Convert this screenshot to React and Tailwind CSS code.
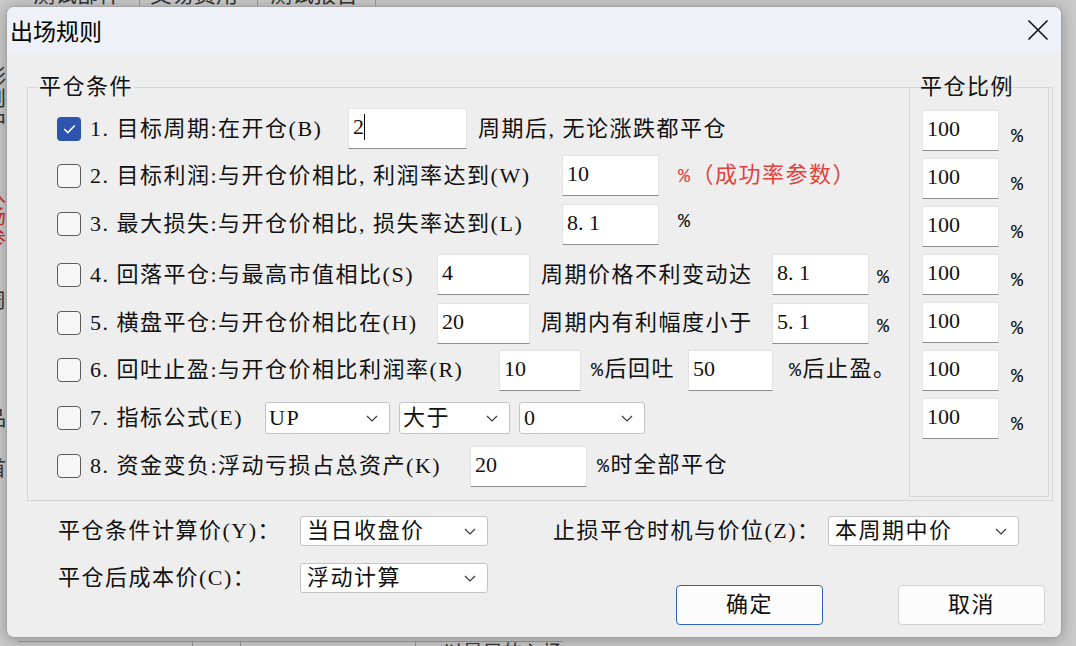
import React from "react";

const serif = "font-['Liberation_Serif','Noto_Sans_CJK_SC',serif]";
const mono = "font-['Liberation_Mono','Noto_Sans_CJK_SC',monospace]";

function Check({ checked }) {
  if (checked) {
    return (
      <div className="flex-none w-[24px] h-[24px] rounded-[4px] bg-[#2d55b0] flex items-center justify-center">
        <svg width="13" height="10" viewBox="0 0 13 10">
          <path d="M1.2 5l3.6 3.6L11.8 1.4" fill="none" stroke="white" strokeWidth="1.5" />
        </svg>
      </div>
    );
  }
  return <div className="flex-none w-[24px] h-[24px] rounded-[4px] border-[1.5px] border-[#5c5c5c] bg-[#f6f6f6]" />;
}

function Field({ className = "", children }) {
  return (
    <div
      className={`flex-none flex h-[41px] bg-white border border-[#e3e3e3] border-b-[#8e8e8e] pl-[4px] pt-[5px] text-[22px] leading-[26px] tracking-normal ${className}`}
    >
      {children}
    </div>
  );
}

function Drop({ className = "", text }) {
  return (
    <div
      className={`flex-none flex items-center justify-between bg-white border border-[#c4c4c4] rounded-[3px] pr-[11px] text-[22px] leading-[26px] ${className}`}
    >
      <span>{text}</span>
      <svg width="12" height="7" viewBox="0 0 12 7">
        <path d="M1 1l5 5 5-5" fill="none" stroke="#333" strokeWidth="1.1" />
      </svg>
    </div>
  );
}

function Pct({ className = "" }) {
  return <span className={`${mono} text-[20px] leading-[26px] ${className}`}>%</span>;
}

export default function App() {
  return (
    <div className="relative w-[1076px] h-[646px] overflow-hidden bg-[#c9c9c9] text-[#111]">
      {/* app behind the dialog */}
      <div className={`flex h-[22px] -mt-[16px] text-[22px] leading-[22px] text-[#333] ${serif}`}>
        <div className="w-[140px] pl-[33px] border-r border-[#9a9a9a]">测试部件</div>
        <div className="w-[118px] pl-[10px] border-r border-[#9a9a9a]">交易费用</div>
        <div className="w-[118px] pl-[12px] border-r border-[#9a9a9a]">测试报告</div>
      </div>
      <div className={`flex flex-col w-[6px] overflow-hidden text-[20px] leading-[22px] text-[#333] ${serif}`}>
        <div className="mt-[60px] -ml-[14px]">彩</div>
        <div className="-ml-[14px]">则</div>
        <div className="-ml-[14px]">中</div>
        <div className="mt-[52px] -ml-[14px] text-[#c33]">入</div>
        <div className="-ml-[14px] text-[#c33]">场</div>
        <div className="-ml-[14px] text-[#c33]">参</div>
        <div className="mt-[40px] -ml-[14px]">周</div>
        <div className="mt-[96px] -ml-[14px]">品</div>
        <div className="mt-[28px] -ml-[14px]">首</div>
      </div>

      {/* dialog */}
      <div
        className={`absolute left-[6px] top-[6px] w-[1056px] h-[632px] rounded-[8px] border border-[#a4a4a4] bg-[#eeeeee] shadow-[0_2px_14px_rgba(0,0,0,0.28)] overflow-hidden flex flex-col ${serif}`}
      >
        {/* title bar */}
        <div className="flex-none h-[45px] bg-[#eef1f8] flex items-center justify-between pl-[3px] pr-[12px]">
          <span className="font-['Noto_Sans_CJK_SC',sans-serif] text-[23px] leading-[30px] text-black">出场规则</span>
          <svg width="22" height="22" viewBox="0 0 22 22">
            <path d="M1.5 1.5l19 19M20.5 1.5l-19 19" stroke="#111" strokeWidth="1.6" />
          </svg>
        </div>

        {/* group box */}
        <fieldset className="flex-none mt-[23px] ml-[20px] w-[1026px] h-[426px] border border-[#d6d6d6] tracking-[1.5px]">
          <legend className="ml-[10px] px-[1px] text-[22px] leading-[24px]">平仓条件</legend>
          <div className="flex h-[401px]">
            <div className="w-[881px] pl-[29px] pt-[6px] text-[22px] leading-[26px]">
              <div className="flex items-center h-[47px]">
                <Check checked />
                <span className="ml-[9px] w-[258px]">1. 目标周期:在开仓(B)</span>
                <Field className="w-[119px] pl-[2px]">
                  <span>2</span>
                  <span className="w-[1px] h-[26px] bg-black" />
                </Field>
                <span className="ml-[11px]">周期后, 无论涨跌都平仓</span>
              </div>
              <div className="flex items-center h-[47px]">
                <Check />
                <span className="ml-[9px] w-[472px] whitespace-nowrap">2. 目标利润:与开仓价相比, 利润率达到(W)</span>
                <Field className="w-[97px]">10</Field>
                <span className="ml-[19px] text-[#e5403a]">
                  <Pct />（成功率参数）
                </span>
              </div>
              <div className="flex items-center h-[50px]">
                <Check />
                <span className="ml-[9px] w-[472px] whitespace-nowrap">3. 最大损失:与开仓价相比, 损失率达到(L)</span>
                <Field className="w-[97px]">8. 1</Field>
                <Pct className="ml-[19px] -mt-[4px]" />
              </div>
              <div className="flex items-center h-[51px]">
                <Check />
                <span className="ml-[9px] w-[347px]">4. 回落平仓:与最高市值相比(S)</span>
                <Field className="w-[93px]">4</Field>
                <span className="ml-[11px] w-[231px] whitespace-nowrap">周期价格不利变动达</span>
                <Field className="w-[97px]">8. 1</Field>
                <Pct className="ml-[8px] pt-[7px]" />
              </div>
              <div className="flex items-center h-[46px]">
                <Check />
                <span className="ml-[9px] w-[347px]">5. 横盘平仓:与开仓价相比在(H)</span>
                <Field className="w-[93px]">20</Field>
                <span className="ml-[11px] w-[231px] whitespace-nowrap">周期内有利幅度小于</span>
                <Field className="w-[97px]">5. 1</Field>
                <Pct className="ml-[8px] pt-[8px]" />
              </div>
              <div className="flex items-center h-[48px]">
                <Check />
                <span className="ml-[9px] w-[409px] whitespace-nowrap">6. 回吐止盈:与开仓价相比利润率(R)</span>
                <Field className="w-[82px]">10</Field>
                <span className="ml-[10px] w-[97px] whitespace-nowrap">
                  <Pct />后回吐
                </span>
                <Field className="w-[85px]">50</Field>
                <span className="ml-[16px] whitespace-nowrap">
                  <Pct />后止盈。
                </span>
              </div>
              <div className="flex items-center h-[48px]">
                <Check />
                <span className="ml-[9px] w-[175px]">7. 指标公式(E)</span>
                <Drop className="w-[125px] h-[32px] pl-[3px]" text="UP" />
                <Drop className="ml-[9px] w-[111px] h-[32px] pl-[3px]" text="大于" />
                <Drop className="ml-[9px] w-[126px] h-[32px] pl-[4px]" text="0" />
              </div>
              <div className="flex items-center h-[48px]">
                <Check />
                <span className="ml-[9px] w-[380px] whitespace-nowrap">8. 资金变负:浮动亏损占总资产(K)</span>
                <Field className="w-[117px]">20</Field>
                <span className="ml-[10px]">
                  <Pct />时全部平仓
                </span>
              </div>
            </div>

            {/* ratio column */}
            <fieldset className="w-[140px] -mt-[24px] mb-[3px] border border-[#d6d6d6]">
              <legend className="ml-[9px] px-[1px] text-[22px] leading-[24px]">平仓比例</legend>
              <div className="flex flex-col gap-[7px] pt-[11px] pl-[12px] text-[22px] leading-[26px]">
                {[0, 1, 2, 3, 4, 5, 6].map((i) => (
                  <div key={i} className="flex items-center">
                    <Field className="w-[77px]">100</Field>
                    <Pct className="ml-[12px] pt-[13px]" />
                  </div>
                ))}
              </div>
            </fieldset>
          </div>
        </fieldset>

        {/* bottom settings */}
        <div className="flex items-center mt-[15px] pl-[51px] text-[22px] leading-[26px] tracking-[1.5px]">
          <span className="w-[242px] whitespace-nowrap">平仓条件计算价(Y)：</span>
          <Drop className="w-[188px] h-[30px] pl-[6px]" text="当日收盘价" />
          <span className="ml-[65px] w-[275px] whitespace-nowrap">止损平仓时机与价位(Z)：</span>
          <Drop className="w-[191px] h-[30px] pl-[6px]" text="本周期中价" />
        </div>
        <div className="flex items-start mt-[17px] pl-[51px] text-[22px] leading-[26px] tracking-[1.5px]">
          <div className="flex items-center h-[30px]">
            <span className="w-[242px] whitespace-nowrap">平仓后成本价(C)：</span>
            <Drop className="w-[188px] h-[30px] pl-[6px]" text="浮动计算" />
          </div>
          <div className="flex ml-[188px] mt-[22px]">
            <button className="w-[147px] h-[40px] rounded-[4px] border border-[#2a62c4] bg-[#fcfcfc]">确定</button>
            <button className="ml-[75px] w-[147px] h-[40px] rounded-[4px] border border-[#d2d2d2] bg-[#fcfcfc]">取消</button>
          </div>
        </div>
      </div>

      {/* bottom strip of the app behind */}
      <div
        className={`absolute left-[18px] top-[641px] flex text-[20px] leading-[22px] text-[#333] border-t border-[#888] ${serif}`}
      >
        <span className="w-[175px] border-r border-[#888] pl-[4px]">2020/ 2/17</span>
        <span className="w-[48px] border-r border-[#888]" />
        <span className="w-[175px] border-r border-[#888] pl-[4px]">2021/ 1/17</span>
        <span className="pl-[20px]">(以最早的入场</span>
      </div>
    </div>
  );
}
